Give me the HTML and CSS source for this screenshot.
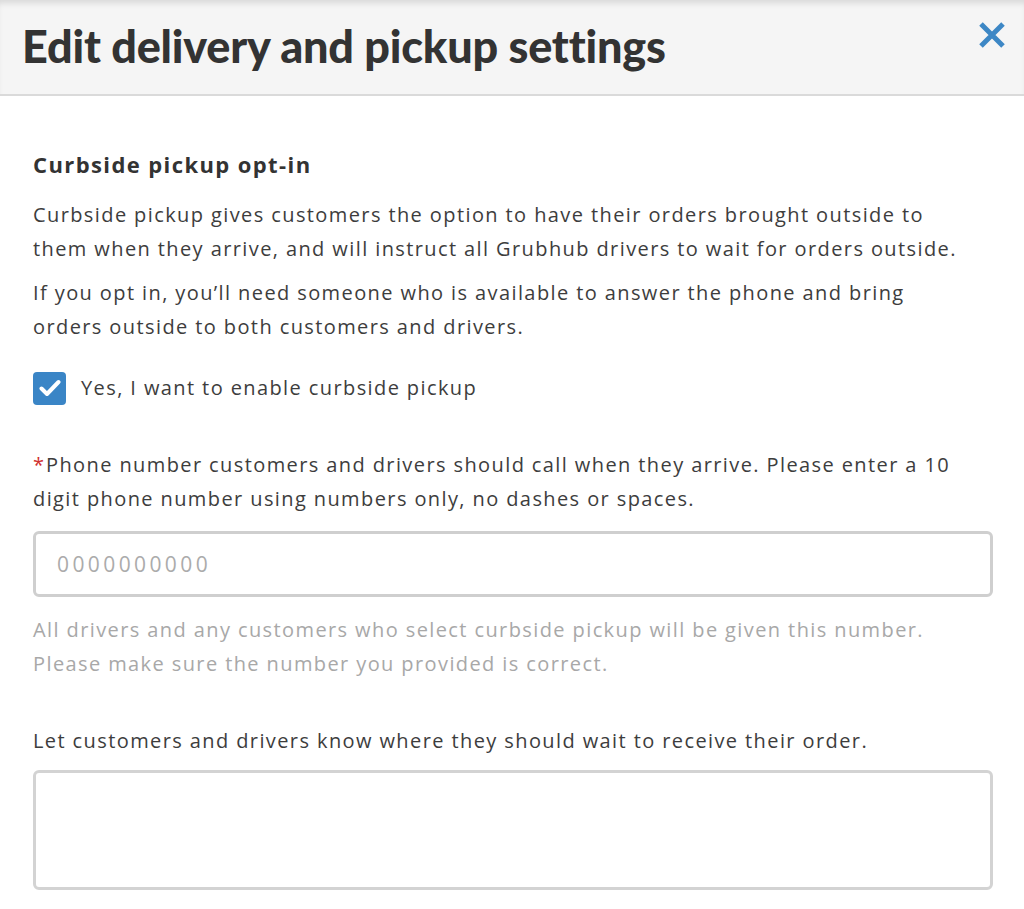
FILE: index.html
```html
<!DOCTYPE html>
<html lang="en">
<head>
<meta charset="utf-8">
<title>Edit delivery and pickup settings</title>
<link rel="stylesheet" href="styles.css">
</head>
<body>
<div class="modal">
  <header class="modal-header">
    <h1 class="modal-title">Edit delivery and pickup settings</h1>
    <button class="close-btn" aria-label="Close">
      <svg width="28" height="28" viewBox="0 0 28 28"><path d="M3 3 L25 25 M25 3 L3 25" stroke="#3d87c5" stroke-width="5" stroke-linecap="butt"/></svg>
    </button>
  </header>
  <main class="modal-body">
    <h2 class="section-title">Curbside pickup opt-in</h2>
    <p class="para para-first">Curbside pickup gives customers the option to have their orders brought outside to them when they arrive, and will instruct all Grubhub drivers to wait for orders outside.</p>
    <p class="para para-second">If you opt in, you’ll need someone who is available to answer the phone and bring orders outside to both customers and drivers.</p>
    <label class="check-row">
      <span class="checkbox">
        <svg width="22" height="18" viewBox="0 0 22 18"><path d="M2.5 9.5 L8 15 L19.5 3" fill="none" stroke="#fff" stroke-width="4" stroke-linecap="round" stroke-linejoin="round"/></svg>
      </span>
      <span class="check-label">Yes, I want to enable curbside pickup</span>
    </label>
    <p class="para field-label"><span class="req">*</span>Phone number customers and drivers should call when they arrive. Please enter a 10 digit phone number using numbers only, no dashes or spaces.</p>
    <div class="input-box"><span class="placeholder">0000000000</span></div>
    <p class="para help">All drivers and any customers who select curbside pickup will be given this number. Please make sure the number you provided is correct.</p>
    <p class="para field-label2">Let customers and drivers know where they should wait to receive their order.</p>
    <div class="textarea-box"></div>
  </main>
</div>
</body>
</html>
```
FILE: styles.css
```css
* { box-sizing: border-box; }
html, body { margin: 0; padding: 0; background: #fff; }
body { font-family: "Open Sans", "Noto Sans", sans-serif; color: #3d3d3d; }

.modal { width: 1024px; }

.modal-header {
  height: 96px;
  background: #f5f5f5;
  border-bottom: 2px solid #dadada;
  box-shadow: inset 0 6px 6px -3px rgba(0,0,0,0.12);
  display: flex;
  align-items: flex-start;
  justify-content: space-between;
  padding: 0 18px 0 22px;
}
.modal-title {
  margin: 0;
  padding-top: 17px;
  font-family: "Lato", sans-serif;
  font-size: 45px;
  line-height: 58px;
  font-weight: 900;
  color: #333;
  letter-spacing: -0.2px;
}
.close-btn {
  border: 0;
  background: none;
  padding: 0;
  margin-top: 21px;
  width: 28px;
  height: 28px;
  cursor: pointer;
}
.close-btn svg { display: block; }

.modal-body {
  padding: 53px 31px 0 33px;
  display: flex;
  flex-direction: column;
}
.section-title {
  margin: 0;
  font-size: 22px;
  line-height: 30px;
  font-weight: 700;
  letter-spacing: 1.4px;
  color: #333;
}
.para {
  margin: 0;
  max-width: 940px;
  font-size: 20px;
  line-height: 34px;
  letter-spacing: 1.4px;
  color: #3d3d3d;
}
.para-first { margin-top: 19px; }
.para-second { margin-top: 10px; }

.check-row {
  display: flex;
  align-items: center;
  gap: 15px;
  margin-top: 27px;
}
.checkbox {
  width: 33px;
  height: 33px;
  border-radius: 4px;
  background: #3a85c6;
  display: flex;
  align-items: center;
  justify-content: center;
}
.checkbox svg { display: block; }
.check-label { font-size: 20px; line-height: 34px; letter-spacing: 1.4px; }

.field-label { margin-top: 43px; }
.req { color: #d0302f; letter-spacing: 0; margin-right: 2px; }

.input-box {
  margin-top: 15px;
  height: 66px;
  border: 3px solid #cfcfcf;
  border-radius: 6px;
  display: flex;
  align-items: center;
  padding-left: 21px;
}
.placeholder { font-size: 21px; letter-spacing: 3.4px; color: #ababab; }

.help { margin-top: 16px; color: #a8a8a8; }
.field-label2 { margin-top: 43px; }

.textarea-box {
  margin-top: 12px;
  height: 120px;
  border: 3px solid #d3d3d3;
  border-radius: 6px;
}
```
